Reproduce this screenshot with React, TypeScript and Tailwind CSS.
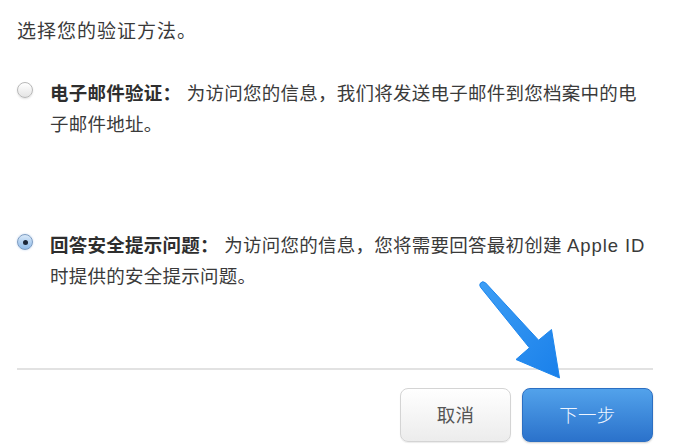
import React from "react";

function Radio({ checked }: { checked: boolean }) {
  if (checked) {
    return (
      <div className="mt-[4px] flex h-[16px] w-[16px] shrink-0 items-center justify-center rounded-full border border-[#7d9cc2] bg-gradient-to-b from-[#d8e8f8] to-[#8fbbe9] shadow-[0_0_2px_rgba(60,120,200,0.35)]">
        <div className="h-[5px] w-[5px] rounded-full bg-[#1b2638]" />
      </div>
    );
  }
  return (
    <div className="mt-[4px] h-[16px] w-[16px] shrink-0 rounded-full border border-[#b8b8b8] bg-gradient-to-b from-[#ffffff] to-[#e4e4e4] shadow-[0_1px_2px_rgba(0,0,0,0.12)]" />
  );
}

export default function App() {
  return (
    <div className="relative h-[446px] w-[681px] overflow-hidden bg-white font-['Liberation_Sans','Noto_Sans_CJK_SC',sans-serif] text-[18.5px] leading-[31px] tracking-[0.25px] text-[#3a3a3a]">
      <div className="flex flex-col pl-[17px] pt-[16px] pr-[28px]">
        <div className="text-[19px] tracking-[1px]">选择您的验证方法。</div>

        <div className="mt-[31px] flex items-start gap-[17px]">
          <Radio checked={false} />
          <div className="w-[600px]">
            <span className="font-bold text-[#2e2e2e]">电子邮件验证：</span> 为访问您的信息，我们将发送电子邮件到您档案中的电子邮件地址。
          </div>
        </div>

        <div className="mt-[90px] flex items-start gap-[17px]">
          <Radio checked={true} />
          <div className="w-[600px]">
            <span className="font-bold text-[#2e2e2e]">回答安全提示问题：</span> 为访问您的信息，您将需要回答最初创建 <span className="tracking-[0.9px]">Apple ID</span> 时提供的安全提示问题。
          </div>
        </div>

        <div className="mt-[76px] h-[2px] w-[636px] bg-[#e2e2e2]" />

        <div className="mt-[18px] flex w-[636px] justify-end gap-[11px]">
          <button className="flex h-[54px] w-[111px] items-center justify-center rounded-[8px] border border-[#d4d4d4] bg-gradient-to-b from-[#ffffff] to-[#ececec] text-[#555555] shadow-[0_1px_1px_rgba(0,0,0,0.08)]">
            取消
          </button>
          <button className="flex h-[54px] w-[131px] items-center justify-center rounded-[8px] border border-[#2c6fc2] bg-gradient-to-b from-[#52a2eb] to-[#2b72cb] font-light text-[#eef5ff] shadow-[0_1px_2px_rgba(0,0,0,0.2)]">
            下一步
          </button>
        </div>
      </div>

      <svg
        className="pointer-events-none absolute left-0 top-0"
        width="681"
        height="446"
        viewBox="0 0 681 446"
      >
        <defs>
          <linearGradient id="arr" x1="0" y1="0" x2="1" y2="1">
            <stop offset="0" stopColor="#3d9ef5" />
            <stop offset="1" stopColor="#1a80ea" />
          </linearGradient>
        </defs>
        <path
          d="M480.5 287.2 L529.4 347.8 L516 359.5 L559.5 378 L551.5 329.5 L538.6 340.2 L485.5 282.8 Q482.5 280.5 480.5 283 Q479 285 480.5 287.2 Z"
          fill="url(#arr)"
          stroke="#1d86ee"
          strokeWidth="1"
          strokeLinejoin="round"
        />
      </svg>
    </div>
  );
}
